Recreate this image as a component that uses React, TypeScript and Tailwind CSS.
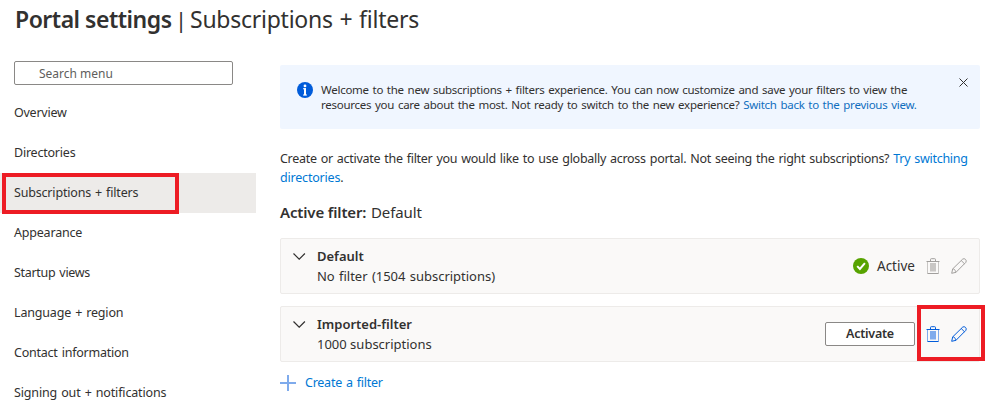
import type { ReactNode } from "react";

const navItems = [
  { label: "Overview", tracking: "tracking-[-0.25px]" },
  { label: "Directories", tracking: "tracking-[-0.22px]" },
  { label: "Subscriptions + filters", tracking: "tracking-[-0.18px]", selected: true },
  { label: "Appearance", tracking: "tracking-[-0.2px]" },
  { label: "Startup views", tracking: "tracking-[-0.3px]" },
  { label: "Language + region", tracking: "tracking-[-0.17px]" },
  { label: "Contact information", tracking: "tracking-[-0.23px]" },
  { label: "Signing out + notifications", tracking: "tracking-[-0.15px]" },
];

function InfoIcon() {
  return (
    <svg className="size-4 shrink-0" viewBox="0 0 16 16">
      <circle cx="8" cy="8" r="8" fill="#015cda" />
      <circle cx="8" cy="3.9" r="1.4" fill="#fff" />
      <path d="M6 6.200h3v6.300h1v1H6v-1h1V7.200H6z" fill="#fff" />
      <path d="M7 6.200h2v7H7z" fill="#fff" />
    </svg>
  );
}

function CloseIcon() {
  return (
    <svg className="size-[9px]" viewBox="0 0 9 9" fill="none" stroke="#323130" strokeWidth="1">
      <path d="M.5.5l8 8M8.500.5l-8 8" />
    </svg>
  );
}

function ChevronIcon() {
  return (
    <svg className="h-[7px] w-[13px] shrink-0" viewBox="0 0 13 7" fill="none" stroke="#323130" strokeWidth="1.2">
      <path d="M.5.5l5.700 5.700 5.700-5.700" />
    </svg>
  );
}

function CheckIcon() {
  return (
    <svg className="size-4 shrink-0" viewBox="0 0 16 16">
      <circle cx="8" cy="8" r="8" fill="#57a300" />
      <path d="M4.200 8.100l2.700 2.800 5-5.700" fill="none" stroke="#fff" strokeWidth="2" />
    </svg>
  );
}

function TrashIcon({ line, fill }: { line: string; fill: string }) {
  return (
    <svg className="h-4 w-[14px] shrink-0" viewBox="0 0 14 16" fill="none">
      <rect x="4" y="5" width="6" height="8.500" fill={fill} />
      <path d="M1.500 3.500v12M12.500 3.500v12" stroke={fill} />
      <path d="M1.500 15.500h11" stroke={line} />
      <path d="M.5 3.500h13" stroke={line} />
      <path d="M4.500 3V1.500q0-.8.8-.8h3.400q.8 0 .8.8V3" stroke={line} />
    </svg>
  );
}

function PencilIcon({ line }: { line: string }) {
  return (
    <svg className="size-4 shrink-0" viewBox="0 0 16 16" fill="none" stroke={line} strokeWidth="1">
      <path d="M.7 15.300l1-4.400L11.700 1.100q1.500-1 2.800.3t.4 2.900L5 14.300zM1.700 10.900q1.200-.1 1.900.7t.7 1.700q.5.100.7 1M10.200 2.500l3.300 3.300" />
    </svg>
  );
}

function FilterCard({ name, detail, children }: { name: ReactNode; detail: ReactNode; children: ReactNode }) {
  return (
    <div className="flex h-14 items-center rounded-[2px] border border-[#edebe9] bg-[#faf9f8] pr-3 pl-3">
      <div className="mb-5">
        <ChevronIcon />
      </div>
      <div className="ml-[11px] flex-1 leading-5">
        {name}
        {detail}
      </div>
      {children}
    </div>
  );
}

export default function App() {
  return (
    <div className="relative h-[413px] w-[999px] overflow-hidden bg-white font-['Noto_Sans','Open_Sans',sans-serif] text-[13px] whitespace-nowrap text-[#323130]">
      <header className="flex h-[61px] pt-[3px] pl-[15px] text-[23px] leading-8">
        <h1 className="w-[160px] font-semibold tracking-[-0.5px]">Portal settings</h1>
        <div className="flex">
          <span className="w-[15px] text-[22px]">|</span>
          <span className="tracking-[-0.25px] [word-spacing:1px]">Subscriptions + filters</span>
        </div>
      </header>
      <div className="flex">
        <aside className="w-64">
          <div className="ml-[14px] flex h-6 w-[219px] items-center rounded-[2px] border border-[#8a8886] pl-6 text-[12px] text-[#605e5c]">
            <span className="pt-px">Search menu</span>
          </div>
          <nav className="mt-2 text-[12.500px] [word-spacing:1px]">
            {navItems.map((item) => (
              <div
                key={item.label}
                className={`flex h-10 items-center pl-[14px] ${item.tracking} ${item.selected ? "bg-[#edebe9]" : ""}`}
              >
                <span>{item.label}</span>
              </div>
            ))}
          </nav>
        </aside>
        <main className="ml-6 w-[700px] pt-1">
          <section className="flex h-16 rounded-[2px] bg-[#f0f6ff] pt-[17px] pl-[17px]">
            <InfoIcon />
            <div className="ml-2 w-[630px] text-[11.500px] leading-[15px] [word-spacing:1px]">
              <p className="tracking-[-0.26px]">
                Welcome to the new subscriptions + filters experience. You can now customize and save your filters to view the
              </p>
              <p className="tracking-[-0.26px]">
                resources you care about the most. Not ready to switch to the new experience?{" "}
                <span className="text-[#106ebe]">Switch back to the previous view.</span>
              </p>
            </div>
            <div className="-mt-1 ml-2">
              <CloseIcon />
            </div>
          </section>
          <div className="mt-5 text-[12.500px] leading-[19px] [word-spacing:1px]">
            <p className="tracking-[-0.28px]">
              Create or activate the filter you would like to use globally across portal. Not seeing the right subscriptions?{" "}
              <span className="text-[#0078d4]">Try switching</span>
            </p>
            <p className="tracking-[-0.2px]">
              <span className="text-[#0078d4]">directories</span>.
            </p>
          </div>
          <h2 className="mt-[13px] flex h-6 text-[15px] leading-6">
            <span className="w-[91px] font-semibold tracking-[-0.15px]">Active filter:</span>
            <span className="tracking-[-0.1px]">Default</span>
          </h2>
          <div className="mt-[14px] flex flex-col gap-3">
            <FilterCard
              name={<div className="font-semibold">Default</div>}
              detail={<div className="tracking-[-0.02px] [word-spacing:1px]">No filter (1504 subscriptions)</div>}
            >
              <CheckIcon />
              <span className="ml-2 w-[49px] text-[13.500px]">Active</span>
              <TrashIcon line="#a19f9d" fill="#c8c6c4" />
              <span className="ml-[11px]">
                <PencilIcon line="#a19f9d" />
              </span>
            </FilterCard>
            <FilterCard
              name={<div className="font-semibold">Imported-filter</div>}
              detail={<div>1000 subscriptions</div>}
            >
              <button className="mr-[11px] h-6 w-[90px] rounded-[2px] border border-[#8a8886] bg-white text-[12.500px] font-semibold tracking-[-0.25px]">
                Activate
              </button>
              <TrashIcon line="#015cda" fill="#7fabec" />
              <span className="ml-[11px]">
                <PencilIcon line="#015cda" />
              </span>
            </FilterCard>
          </div>
          <div className="mt-[11px] flex h-5 items-center text-[12.500px] text-[#0078d4]">
            <svg className="size-4" viewBox="0 0 16 16">
              <path d="M8 0v16M0 8h16" stroke="#7fabec" strokeWidth="2" />
            </svg>
            <span className="ml-[9px] tracking-[-0.25px] [word-spacing:1px]">Create a filter</span>
          </div>
        </main>
      </div>
      <div className="absolute top-[173px] left-[2px] h-[41px] w-[177px] border-4 border-[#ed1c24]" />
      <div className="absolute top-[305px] left-[917px] h-14 w-[68px] border-4 border-[#ed1c24]" />
    </div>
  );
}
